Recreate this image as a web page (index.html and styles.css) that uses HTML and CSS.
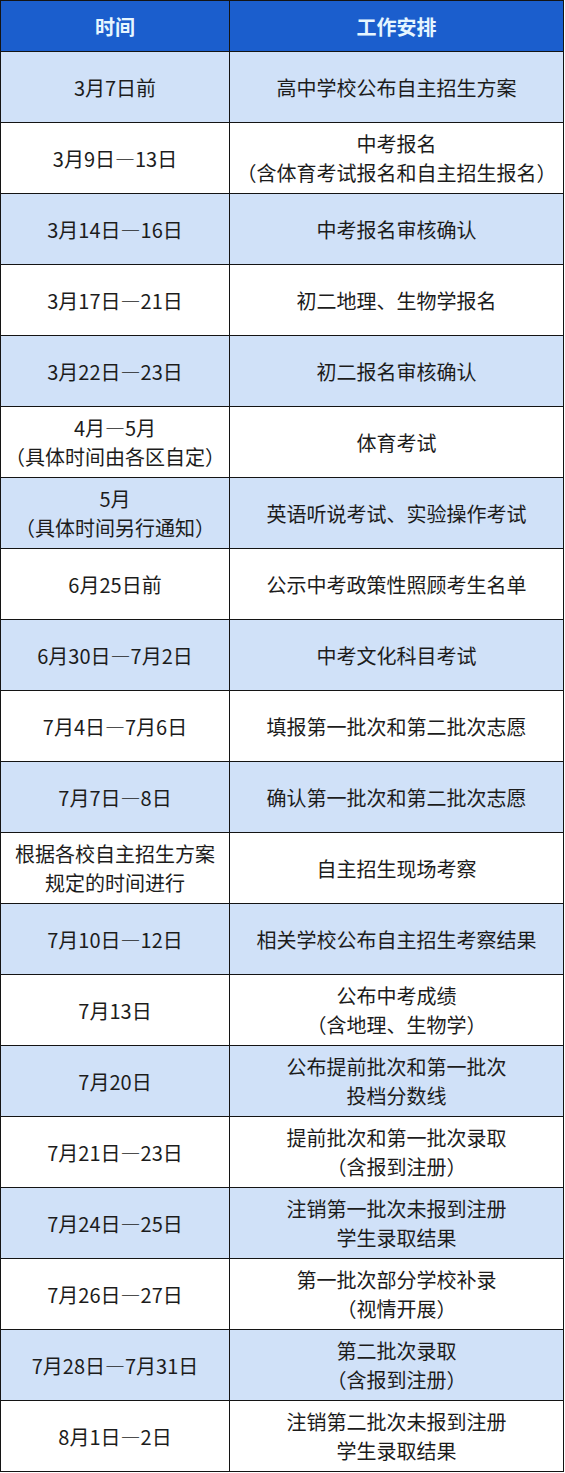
FILE: index.html
```html
<!DOCTYPE html>
<html lang="zh-CN">
<head>
<meta charset="utf-8">
<title>中考工作安排</title>
<link rel="stylesheet" href="styles.css">
</head>
<body>
<table class="schedule">
  <thead>
    <tr class="head"><th class="c-time">时间</th><th class="c-work">工作安排</th></tr>
  </thead>
  <tbody>
    <tr class="alt"><td>3月7日前</td><td>高中学校公布自主招生方案</td></tr>
    <tr><td>3月9日—13日</td><td>中考报名<br>（含体育考试报名和自主招生报名）</td></tr>
    <tr class="alt"><td>3月14日—16日</td><td>中考报名审核确认</td></tr>
    <tr><td>3月17日—21日</td><td>初二地理、生物学报名</td></tr>
    <tr class="alt"><td>3月22日—23日</td><td>初二报名审核确认</td></tr>
    <tr><td>4月—5月<br>（具体时间由各区自定）</td><td>体育考试</td></tr>
    <tr class="alt"><td>5月<br>（具体时间另行通知）</td><td>英语听说考试、实验操作考试</td></tr>
    <tr><td>6月25日前</td><td>公示中考政策性照顾考生名单</td></tr>
    <tr class="alt"><td>6月30日—7月2日</td><td>中考文化科目考试</td></tr>
    <tr><td>7月4日—7月6日</td><td>填报第一批次和第二批次志愿</td></tr>
    <tr class="alt"><td>7月7日—8日</td><td>确认第一批次和第二批次志愿</td></tr>
    <tr><td>根据各校自主招生方案<br>规定的时间进行</td><td>自主招生现场考察</td></tr>
    <tr class="alt"><td>7月10日—12日</td><td>相关学校公布自主招生考察结果</td></tr>
    <tr><td>7月13日</td><td>公布中考成绩<br>（含地理、生物学）</td></tr>
    <tr class="alt"><td>7月20日</td><td>公布提前批次和第一批次<br>投档分数线</td></tr>
    <tr><td>7月21日—23日</td><td>提前批次和第一批次录取<br>（含报到注册）</td></tr>
    <tr class="alt"><td>7月24日—25日</td><td>注销第一批次未报到注册<br>学生录取结果</td></tr>
    <tr><td>7月26日—27日</td><td>第一批次部分学校补录<br>（视情开展）</td></tr>
    <tr class="alt"><td>7月28日—7月31日</td><td>第二批次录取<br>（含报到注册）</td></tr>
    <tr><td>8月1日—2日</td><td>注销第二批次未报到注册<br>学生录取结果</td></tr>
  </tbody>
</table>
</body>
</html>
```
FILE: styles.css
```css
html, body {
  margin: 0;
  padding: 0;
  background: #ffffff;
}

.schedule {
  border-collapse: collapse;
  width: 564px;
  table-layout: fixed;
  font-family: "Noto Sans CJK SC", "Microsoft YaHei", sans-serif;
  font-size: 20px;
  line-height: 29px;
  color: #1c1c1c;
  text-spacing-trim: space-all;
}

.schedule th,
.schedule td {
  border: 1px solid #141414;
  text-align: center;
  vertical-align: middle;
  padding: 0 2px;
  height: 71px;
  box-sizing: border-box;
}

.schedule .c-time {
  width: 229px;
}

.schedule .head th {
  height: 51px;
  background: #1b5ecd;
  color: #e6f6ff;
  font-weight: bold;
}

.schedule tr.alt td {
  background: #d0e1f8;
}
```
